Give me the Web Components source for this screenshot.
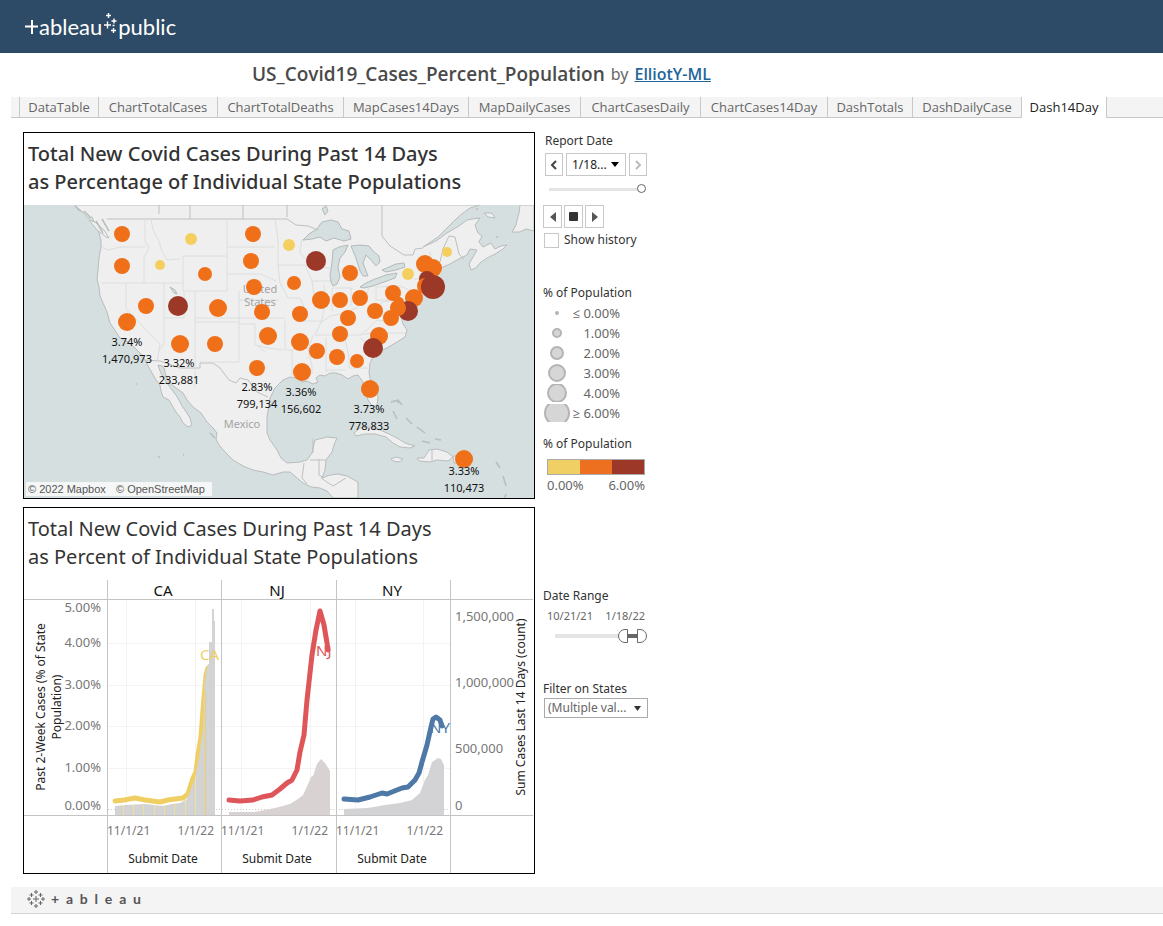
<!DOCTYPE html>
<html lang="en">
<head>
<meta charset="utf-8">
<title>US_Covid19_Cases_Percent_Population</title>
<style>
body{margin:0;background:#fff;color:#333;font-family:"Noto Sans","Open Sans",sans-serif;font-size:12px}
</style>
</head>
<body>
<viz-page></viz-page>

<template id="t-page">
<style>
:host{display:block}
main{display:grid;grid-template-columns:minmax(0,512px) 106px;gap:8px;padding:14px 0 0 23px}
.panels{display:flex;flex-direction:column;gap:8px}
</style>
<site-header></site-header>
<viz-heading></viz-heading>
<viz-tabs></viz-tabs>
<main>
  <div class="panels">
    <viz-panel strong>
      <span slot="title">Total New Covid Cases During Past 14 Days<br>as Percentage of Individual State Populations</span>
      <covid-map></covid-map>
    </viz-panel>
    <viz-panel>
      <span slot="title">Total New Covid Cases During Past 14 Days<br>as Percent of Individual State Populations</span>
      <covid-chart></covid-chart>
    </viz-panel>
  </div>
  <viz-controls></viz-controls>
</main>
<viz-footer></viz-footer>
</template>

<template id="t-header">
<style>
:host{display:block;background:#2d4b66}
header{box-sizing:border-box;height:53px;padding-left:25px;display:flex;align-items:center}
a{display:flex;align-items:center;color:#fff;text-decoration:none;font:22px/28px Lato,sans-serif}
svg{display:block;fill:none;stroke:#fff}
</style>
<header><a href="#" aria-label="Tableau Public">
<svg width="14" height="28"><path d="M0 13.5h13M7 7v14" stroke-width="2"/></svg><span>ableau</span>
<svg width="16" height="28" viewBox="-2 0 16 28" stroke-width="1.4"><path d="M4.500 0v5M2 2.500h5M10 5.500v5M7.500 8h5M3.500 8.500v7M0 12h7M9.500 15v5M7 17.500h5M8.500 12.500h2"/></svg><span>public</span></a></header>
</template>

<template id="t-heading">
<style>
:host{display:block;padding-left:252px}
div{display:flex;align-items:center;gap:6px;height:42px;padding-bottom:2px;white-space:nowrap}
h1{margin:0;font:600 19px/24px "Open Sans",sans-serif;color:#4a4a4a}
span{font-size:16px;color:#666}
a{font:600 16px/24px "Open Sans",sans-serif;color:#1f669c}
</style>
<div><h1>US_Covid19_Cases_Percent_Population</h1><span>by</span><a href="#">ElliotY-ML</a></div>
</template>

<template id="t-tabs">
<style>
:host{display:block;padding-left:11px}
nav{display:grid;grid-template-columns:8px 79px 119px 126px 125px 112px 120px 127px 85px 109px 86px 1fr;height:21px;box-sizing:border-box;background:#f4f4f4;border-bottom:1px solid #c8c8c8}
a{border-left:1px solid #c8c8c8;text-align:center;color:#666;text-decoration:none;font:13px/20px "Open Sans",sans-serif;white-space:nowrap}
a:first-of-type{grid-column:2}
a:last-of-type{background:#fff;color:#222;height:21px;border-right:1px solid #c8c8c8}
</style>
<nav><a href="#">DataTable</a><a href="#">ChartTotalCases</a><a href="#">ChartTotalDeaths</a><a href="#">MapCases14Days</a><a href="#">MapDailyCases</a><a href="#">ChartCasesDaily</a><a href="#">ChartCases14Day</a><a href="#">DashTotals</a><a href="#">DashDailyCase</a><a href="#" aria-current="page">Dash14Day</a></nav>
</template>

<template id="t-panel">
<style>
:host{display:block;border:1px solid #000}
h2{margin:0;padding:7px 0 9px 4px;font-size:20px;line-height:28px;font-weight:400;color:#333;white-space:nowrap}
:host([strong]) h2{font-weight:500}
</style>
<h2><slot name="title"></slot></h2><slot></slot>
</template>

<template id="t-map">
<style>
:host{display:block}
svg{display:block;width:100%;height:auto;background:#d5dfe0}
.land{fill:#efefef;stroke:#b8bcbc;stroke-width:1}
.water{fill:#d5dfe0;stroke:#b4baba;stroke-width:1}
.state{fill:none;stroke:#dcdede;stroke-width:1}
.border{fill:none;stroke:#bfbfbf;stroke-width:1}
.place{fill:#a3a3a3;font-size:11px}
.val{fill:#111;font-size:11px}
text{text-anchor:middle}
.credit rect{fill:#fff;fill-opacity:.75}
.credit text{fill:#555;font:11px "Liberation Sans",sans-serif;text-anchor:start}
</style>
<svg viewBox="24 205 510 293" role="img" aria-label="Map of cases by state">
<path class="land" d="M75 205L78 210L83 212L88 218L92 217L95 224L98 230L101 240L101 247L99 258L98 270L97 279L99 287L100 296L103 303L107 312L110 323L116 332L120 338L128 342L135 348L141 354L145 360L148 366L152 373L156 380L160 385L161 391L163 397L169 400L173 407L176 412L180 417L183 423L188 427L192 425L190 418L187 413L182 406L180 402L176 395L172 390L167 383L163 377L160 371L158 365L162 366L164 368L166 376L170 383L176 388L183 393L187 400L193 407L201 413L207 422L213 428L217 433L216 439L219 445L226 453L233 460L243 466L253 470L263 472L273 475L283 472L290 472L297 478L303 483L311 487L320 488L327 491L333 498H358L358 482L347 476L338 474L330 475L322 478L325 470L326 460L332 452L334 445L337 438L327 437L315 440L312 453L307 460L300 462L287 463L281 458L277 450L270 440L267 433L267 417L269 405L270 398L275 388L283 380L290 377L297 378L302 382L307 381L313 384L318 382L316 378L320 375L325 376L330 373L336 373L342 375L348 379L353 376L358 375L363 382L362 390L366 393L368 400L373 407L377 405L378 397L376 390L373 385L370 378L369 373L370 363L373 357L377 355L382 350L387 348L392 345L397 342L405 337L407 330L403 324L401 316L406 311L412 308L418 299L425 293L437 292L440 289L436 280L439 271L443 267L450 264L457 260L461 258L467 255L470 249L477 250L473 257L469 264L471 270L476 268L480 263L487 258L495 254L503 249L507 245L501 246L495 249L491 243L483 247L479 242L482 236L478 233L475 225L480 218L472 219L467 220L459 226L447 233L436 241L423 247L438 237L448 227L455 220L463 213L470 208L480 205Z"/>
<path class="land" d="M512 232L516 225L517 220L519 213L520 205H534V231L526 229L520 232ZM484 213L492 213L495 218L488 217ZM354 433L360 428L370 427L380 430L389 434L397 438L405 443L415 446L410 448L400 447L393 443L386 437L375 434L365 434L356 436ZM417 458L424 458L429 450L437 449L447 452L453 457L448 461L437 460L430 462L419 461ZM391 459L396 457L403 459L399 462L393 461ZM453 456h17l3 4l-6 3h-13ZM89 220L95 222L104 230L109 238L106 237L97 230Z"/>
<g class="water"><path d="M303 240L309 234L317 229L322 222L331 220L338 222L342 229L349 231L351 239L344 241L334 238L326 241L320 237L312 239ZM331 282L330 275L332 263L333 250L339 247L348 245L345 252L340 258L338 267L340 277L337 284L333 286ZM351 246L360 245L369 246L373 251L379 256L380 262L376 266L370 259L366 255L363 263L368 276L363 276L360 271L356 258ZM360 287L366 283L375 279L386 275L397 273L395 278L384 282L373 286L364 288ZM382 270L389 267L396 264L404 263L405 267L396 270L386 272Z"/><path d="M322 209l4-3 2 5-3 4ZM170 287l5 3 2 4-3-1Z"/></g>
<path class="border" d="M107 219H287L296 225L308 226L318 230M145 360L160 361L180 368H200V363H213L220 368L229 380L236 383L240 378L248 380L257 392L268 397M159 205V214M190 205V219M243 205V219M382 205V236L390 246L404 255L413 255L415 249L423 248M440 262L443 249L449 236L455 237L459 254L464 259M287 205V217M304 463L302 478L307 484M319 459V475L324 478M310 460H326M313 439V453M321 478L333 486L346 478M432 449V461"/>
<path class="state" d="M101 247L108 250L120 247H145M145 219V241L149 248L144 257V283M102 283H183M126 283V309L160 344L157 362M164 283V344L159 350M164 318H184V292M144 257M151 219L153 230L159 241L161 249L167 260L180 259M183 256H227V291H183ZM227 219V256M227 247H275M227 274H261L276 281M195 291V387M239 291V322H195M239 300H279M239 322V362H200M195 318H285M239 324H255V345L268 348L283 350M275 219L278 240V265H305M278 265L280 283L288 298H300L304 307L304 321M285 321V350M285 350H292V378M292 350L310 348M304 321H323L330 316L345 313L356 308L365 300L369 287M302 239L300 253L312 266L330 268M305 265L312 281H330M312 281L314 295L324 309L322 320L315 335H360L367 330M324 285V309M332 288V311M351 288V306M332 288H353M376 287V300H402M376 287L400 286L414 292M313 335L308 350L312 366V374M326 338V372M345 338L349 358V368H368M326 370H345M360 338L379 352M360 335L371 333H405M368 318L382 302L389 301M421 255L423 277M430 252L433 270M414 279H438M367 330L377 320L390 322M306 358H308M265 352L258 346"/>
<text class="place" x="260" y="293">United</text><text class="place" x="260" y="306">States</text><text class="place" x="242" y="428">Mexico</text>
<g id="dots"></g><g id="vals"></g>
<path d="M396 400l3 3m-6 8 4 8m9-1 6 6m5 3 8 6m-3 8 8 2m5-4 6 1m55 22 4 6m3 8 3 10m0 8-3 8M391 402l7-2 4 5M476 209h2M496 237l2 0M475 179l1 1M136 384h1M210 433l5 5M158 457h2M183 455h1M75 206l6 5m3 0 6 6m6 4 7 12m-1-14 7 12" fill="none" stroke="#b8bdbd" stroke-width="1.500"/>
<g class="credit"><rect x="26" y="482" width="186" height="14"/><text x="28" y="493">© 2022 Mapbox</text><text x="116" y="493">© OpenStreetMap</text></g>
</svg>
</template>

<template id="t-chart">
<style>
:host{display:block}
svg{display:block;width:100%;height:auto}
text{font-size:12px}
.frame{stroke:#c4c4c4}
.grid{stroke:#f3f3f3}
.tick{fill:#777}
.num{font-size:13px}
.axis{fill:#222}
.head{fill:#111;font-size:15px}
.mid{text-anchor:middle}.end{text-anchor:end}
.line{fill:none;stroke-width:5;stroke-linecap:round;stroke-linejoin:round}
.mark{font-size:15px}
</style>
<svg viewBox="24 580 510 293" role="img" aria-label="Cases in CA, NJ and NY">
<path class="grid" d="M108 643.500H450M108 685.500H450M108 726.500H450M108 768.500H450M126.500 600V815M195.500 600V815M241.500 600V815M310.500 600V815M355.500 600V815M423.500 600V815"/>
<path d="M108 809.500H450" stroke="#ccc" stroke-dasharray="1 2"/>
<path class="line" stroke="#efcf63" d="M115 801L124 800L135 798L145 800L160 802L168 800L175 799L183 798L188 794L193 778L196 772L198 755L201 737L203 710L206 675L208 668"/>
<path fill="#d3d3d3" d="M115 815V806L125 805L145 804L163 806L172 804L180 803L187 799L191 789L195 778L196 773L199 758L201 742L203 730L204 690L206 672L208 664H209V642H212V609H214V621H215V815Z"/>
<path stroke="#efdfa0" d="M123.500 805V815M133.500 805V815M143.500 805V815M154.500 805V815M164.500 805V815M174.500 804V815M185.500 800V815M195.500 776V815"/>
<path stroke="#efcf63" d="M205.500 690V815"/>
<path fill="#d8d2d2" d="M229 815V812L255 812L275 808L290 804L298 799L303 795L309 782L311 777L313 776L317 764L321 759L325 763L330 771V815Z"/>
<path fill="#d3d3d5" d="M344 815V809L368 808L385 805L400 803L412 800L420 793L425 780L428 775L432 762L438 758L441 759L444 765V815Z"/>
<path class="line" stroke="#de5659" stroke-width="6" d="M229 800L240 801L253 800L262 797L272 795L280 789L287 783L292 780L297 770L300 752L304 735L307 700L312 655L316 630L320 611L324 625L327 643L328 650"/>
<path class="line" stroke="#4e78a6" d="M344 799L358 800L370 797L382 793L387 794L402 788L408 787L415 780L419 773L422 762L427 745L431 727L433 719L436 717L440 720L442 726"/>
<path class="frame" d="M107.500 580V873M221.500 580V873M336.500 580V873M450.500 580V873M24 599.500H533M24 815.500H533"/>
<text class="mark" fill="#efcf63" x="200" y="660">CA</text><text class="mark" fill="#de5659" x="316" y="656">NJ</text><text class="mark" fill="#4e78a6" x="430" y="733">NY</text>
<g id="labels"></g>
<text class="axis mid" transform="translate(45 707) rotate(-90)">Past 2-Week Cases (% of State</text>
<text class="axis mid" transform="translate(61 707) rotate(-90)">Population)</text>
<text class="axis mid" transform="translate(525 707) rotate(-90)">Sum Cases Last 14 Days (count)</text>
</svg>
</template>

<template id="t-controls">
<style>
:host{display:block;line-height:16px}
*{box-sizing:border-box}
button,select{font:12px/16px "Noto Sans",sans-serif;margin:0;padding:0;background:#fff;border:1px solid #c8c8c8;color:#222}
select{appearance:none}
svg{display:block;margin:auto}
.row{display:flex;gap:3px}
label,h3{display:block;margin:0;font-size:12px;line-height:16px;font-weight:400;color:#333}
.date{padding:1px 0 0 2px}
.date .row{margin-top:4px}
.date button{width:18px;height:23px}
.pick{position:relative;width:60px}
.pick select{width:100%;height:23px;padding-left:5px}
.pick svg,.filter svg{position:absolute;right:7px;top:9px;pointer-events:none}
input[type=range]{appearance:none;display:block;margin:0;background:none}
.single{width:98px;height:10px;margin:8px 0 0 5px!important}
.single::-webkit-slider-runnable-track{height:10px;background:linear-gradient(#e4e4e4,#e4e4e4) 1px 4px/90px 3px no-repeat}
.single::-webkit-slider-thumb{appearance:none;width:9px;height:9px;border:1px solid #666;border-radius:50%;background:#fff}
.play{margin-top:11px;gap:2px!important}
.play button{width:19px;height:23px}
.check{display:flex;align-items:center;gap:5px;margin:4px 0 0 1px}
.check input{appearance:none;width:15px;height:15px;margin:0;border:1px solid #c8c8c8}
.sizes{margin-top:37px}
ul{list-style:none;margin:2px 0 0;padding:0;width:77px}
li{display:flex;justify-content:space-between;align-items:center;height:20px;color:#666;font-size:13px;white-space:nowrap}
li svg{margin:0}
.colors{margin-top:13px}
.ramp{display:flex;height:16px;width:98px;margin:7px 0 2px 4px;border:1px solid #aaa}
.ramp i{flex:1}
.ends{display:flex;justify-content:space-between;width:98px;margin-left:4px;color:#666;font-size:13px}
.range{margin-top:95px}
.range .ends{margin-top:4px;font-size:11px}
.dual{display:grid;width:98px;height:14px;margin:5px 0 0 6px;background:linear-gradient(#e4e4e4,#e4e4e4) 6px 5px/70px 4px no-repeat,linear-gradient(#666,#666) 78px 5px/12px 4px no-repeat}
.dual input{grid-area:1/1;width:98px;height:14px;pointer-events:none}
.dual input::-webkit-slider-thumb{appearance:none;pointer-events:auto;width:10px;height:14px;border:1px solid #666;background:#fff;border-radius:7px 0 0 7px}
.dual input:last-child::-webkit-slider-thumb{border-radius:0 7px 7px 0}
.filter{margin-top:38px}
.filter div{position:relative;width:104px;margin:1px 0 0 1px}
.filter select{width:100%;height:20px;padding-left:3px;border-color:#aaa;color:#666}
.filter svg{top:8px}
</style>
<div class="date"><label for="d">Report Date</label>
<div class="row"><button aria-label="Previous"><svg width="8" height="10"><path d="M6 1L2 5L6 9" fill="none" stroke="#444" stroke-width="2"/></svg></button>
<div class="pick"><select id="d"><option>1/18...</option></select><svg width="8" height="5"><path d="M0 0h8L4 5Z"/></svg></div>
<button aria-label="Next"><svg width="8" height="10"><path d="M2 1L6 5L2 9" fill="none" stroke="#bbb" stroke-width="2"/></svg></button></div></div>
<input class="single" type="range" value="100" aria-label="Report date">
<div class="row play"><button aria-label="Play backwards"><svg width="6" height="10"><path d="M6 0V10L0 5Z" fill="#555"/></svg></button><button aria-label="Stop"><svg width="9" height="9"><rect width="9" height="9" rx="1" fill="#333"/></svg></button><button aria-label="Play forwards"><svg width="6" height="10"><path d="M0 0V10L6 5Z" fill="#555"/></svg></button></div>
<label class="check"><input type="checkbox">Show history</label>
<div class="sizes"><h3>% of Population</h3><ul id="sizes"></ul></div>
<div class="colors"><h3>% of Population</h3><div class="ramp"><i style="background:#f0cf64"></i><i style="background:#ed7020"></i><i style="background:#9c3827"></i></div><div class="ends"><span>0.00%</span><span>6.00%</span></div></div>
<div class="range"><h3>Date Range</h3><div class="ends"><span>10/21/21</span><span>1/18/22</span></div><div class="dual"><input type="range" value="78" aria-label="Start date"><input type="range" value="100" aria-label="End date"></div></div>
<div class="filter"><label for="f">Filter on States</label><div><select id="f"><option>(Multiple val...</option></select><svg width="7" height="5"><path d="M0 0h7L3.500 5Z" fill="#333"/></svg></div></div>
</template>

<template id="t-footer">
<style>
:host{display:block;padding:13px 0 0 11px}
footer{box-sizing:border-box;height:27px;background:#f4f4f4;border-bottom:1px solid #d4d4d4;padding-left:16px;display:flex;align-items:center}
a{display:flex;align-items:center;gap:6px;padding-bottom:2px;color:#555;text-decoration:none;font:700 14px/20px Lato,sans-serif;white-space:pre}
svg{fill:none;stroke:#666}
</style>
<footer><a href="#" aria-label="Tableau"><svg width="18" height="18"><path d="M9 6v6M6 9h6M4.500 3v4M2.500 5h4M13.500 3v4M11.500 5h4M4.500 11v4M2.500 13h4M13.500 11v4M11.500 13h4M9 0v4M7 2h4M9 14v4M7 16h4M2 7v4M0 9h4M16 7v4M14 9h4"/></svg><span>+  a  b  l  e  a  u</span></a></footer>
</template>

<script>
const define = (name, id, setup) => customElements.define(name, class extends HTMLElement {
  constructor() {
    super();
    const root = this.attachShadow({mode: 'open'});
    root.append(document.getElementById(id).content.cloneNode(true));
    if (setup) setup(root);
  }
});
define('site-header', 't-header');
define('viz-heading', 't-heading');
define('viz-tabs', 't-tabs');
define('viz-panel', 't-panel');
define('viz-footer', 't-footer');

const O = '#f07019', R = '#9c3827', Y = '#f4cf5f';
const states = [[122,234,8,O],[122,266,8,O],[191,239,6,Y],[160,265,5,Y],[253,234,8,O],[251,261,8,O],[289,245,6,Y],[316,261,10,R],[205,274,7,O],[254,287,8,O],[294,283,7,O],[350,273,8,O],[146,306,8,O],[178,306,10,R],[218,308,9,O],[262,312,8,O],[300,314,8,O],[321,300,9,O],[340,300,8,O],[360,298,8,O],[348,318,8,O],[375,311,8,O],[393,293,8,O],[408,274,6,Y],[447,252,5,Y],[425,264,9,O],[433,268,9,O],[427,279,8,R],[425,286,8,O],[433,287,12,R],[414,298,9,O],[391,318,8,O],[408,311,10,R],[398,308,8,O],[399,302,5,O],[340,334,8,O],[300,342,9,O],[268,336,9,O],[215,344,8,O],[180,344,9,O],[127,322,9,O],[257,368,8,O],[302,372,9,O],[317,351,8,O],[337,357,8,O],[357,361,7,O],[379,336,9,O],[373,348,10,R],[370,389,9,O],[464,459,9,O]];
const values = [[127,346,'3.74%','1,470,973'],[179,367,'3.32%','233,881'],[257,391,'2.83%','799,134'],[301,396,'3.36%','156,602'],[369,413,'3.73%','778,833'],[464,475,'3.33%','110,473']];
define('covid-map', 't-map', root => {
  root.getElementById('dots').innerHTML = states.map(([x, y, r, c]) => `<circle cx="${x}" cy="${y}" r="${r}" fill="${c}"/>`).join('');
  root.getElementById('vals').innerHTML = values.map(([x, y, p, n]) => `<text class="val" x="${x}" y="${y}">${p}</text><text class="val" x="${x}" y="${y + 17}">${n}</text>`).join('');
});

define('covid-chart', 't-chart', root => {
  const t = (cls, x, y, s) => `<text class="${cls}" x="${x}" y="${y}">${s}</text>`;
  let out = '';
  ['5.00%','4.00%','3.00%','2.00%','1.00%','0.00%'].forEach((s, i) => out += t('tick num end', 101, [612,647,689,730,772,810][i], s));
  ['1,500,000','1,000,000','500,000','0'].forEach((s, i) => out += t('tick num', 455, [621,687,753,810][i], s));
  [['CA',107],['NJ',221],['NY',336]].forEach(([s, x]) => {
    out += t('head mid', x + 56, 596, s);
    out += t('tick', x, 835, '11/1/21') + t('tick end', x + 107, 835, '1/1/22') + t('axis mid', x + 56, 863, 'Submit Date');
  });
  root.getElementById('labels').innerHTML = out;
});

define('viz-controls', 't-controls', root => {
  root.getElementById('sizes').innerHTML = [['≤ 0.00%',1],['1.00%',4],['2.00%',6],['3.00%',8],['4.00%',9],['≥ 6.00%',12]]
    .map(([s, r]) => `<li><svg width="28" height="18"><circle cx="14" cy="9" r="${r}" fill="#d6d6d6" stroke="#b4b4b4" stroke-width="2"/></svg>${s}</li>`).join('');
});
define('viz-page', 't-page');
</script>
</body>
</html>
